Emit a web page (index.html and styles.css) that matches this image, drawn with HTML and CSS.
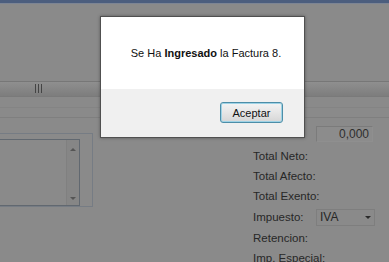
FILE: index.html
```html
<!DOCTYPE html>
<html lang="es">
<head>
    <meta charset="UTF-8">
    <title>Factura</title>
    <link rel="stylesheet" href="styles.css">
</head>
<body>
    <div class="topbar"></div>
    <div class="toolbar"><span class="grip"></span></div>
    <div class="rule rule-a"></div>
    <div class="rule rule-b"></div>

    <div class="content">
        <div class="memo">
            <div class="memo-inner">
                <div class="scroll">
                    <span class="arrow-up"></span>
                    <span class="arrow-down"></span>
                </div>
            </div>
        </div>

        <div class="totals">
            <div class="row-input"><span class="field">0,000</span></div>
            <div class="row">Total Neto:</div>
            <div class="row">Total Afecto:</div>
            <div class="row">Total Exento:</div>
            <div class="row row-select">
                <span class="label">Impuesto:</span>
                <span class="select">IVA<span class="caret"></span></span>
            </div>
            <div class="row">Retencion:</div>
            <div class="row">Imp. Especial:</div>
        </div>
    </div>

    <div class="dialog">
        <div class="dialog-body">
            <p>Se Ha <b>Ingresado</b> la Factura 8.</p>
        </div>
        <div class="dialog-footer">
            <button class="btn">Aceptar</button>
        </div>
    </div>
</body>
</html>
```

FILE: styles.css
```css
body {
    margin: 0;
    width: 389px;
    height: 262px;
    overflow: hidden;
    background: #8a8a8a;
    font-family: 'Liberation Sans', Arial, sans-serif;
    font-size: 11px;
    color: #272727;
    position: relative;
}
.topbar {
    height: 3px;
    background: #4c5e7e;
    border-bottom: 1px solid #7d8594;
}
.toolbar {
    margin-top: 77px;
    height: 14px;
    border-top: 1px solid #777;
    border-bottom: 1px solid #7a7a7a;
    background: linear-gradient(#8f8f8f, #7d7d7d);
    position: relative;
}
.grip {
    display: block;
    margin: 2px 0 0 35px;
    width: 8px;
    height: 9px;
    background: repeating-linear-gradient(90deg, #444 0 1px, transparent 1px 3px);
}
.rule {
    height: 1px;
    background: #7f7f7f;
}
.rule-a {
    margin-top: 10px;
    background: #848484;
}
.rule-b {
    margin-top: 9px;
}
.content {
    display: flex;
}
.memo {
    margin: 15px 0 0 -2px;
    width: 95px;
    height: 74px;
    border: 1px solid #767c84;
    border-left: none;
    box-sizing: border-box;
    padding: 5px 12px 0 0;
}
.memo-inner {
    height: 100%;
    border: 1px solid #616870;
    border-left: none;
    box-sizing: border-box;
    display: flex;
    justify-content: flex-end;
}
.scroll {
    width: 12px;
    border-left: 1px solid #808080;
    background: #868686;
    display: flex;
    flex-direction: column;
    justify-content: space-between;
    align-items: center;
    padding: 8px 0 5px;
}
.arrow-up, .arrow-down {
    width: 0;
    height: 0;
    border-left: 3px solid transparent;
    border-right: 3px solid transparent;
}
.arrow-up {
    border-bottom: 3px solid #555;
}
.arrow-down {
    border-top: 3px solid #555;
}
.totals {
    margin-left: 160px;
    padding-top: 8px;
    width: 130px;
}
.row-input {
    height: 16px;
    margin-bottom: 4px;
}
.field {
    display: block;
    margin-left: 63px;
    width: 57px;
    height: 16px;
    box-sizing: border-box;
    border: 1px solid #7b7b7b;
    border-right-color: #8f8f8f;
    border-bottom-color: #8f8f8f;
    background: #8c8c8c;
    text-align: right;
    padding-right: 3px;
    line-height: 15px;
    font-size: 12px;
    color: #2e2e2e;
}
.row {
    height: 20px;
    line-height: 20px;
    font-size: 11.5px;
}
.row-select {
    height: 22px;
    line-height: 22px;
    display: flex;
    align-items: center;
}
.label {
    width: 63px;
}
.select {
    width: 59px;
    height: 17px;
    box-sizing: border-box;
    border: 1px solid #7e7e7e;
    line-height: 15px;
    padding-left: 3px;
    font-size: 12px;
    position: relative;
}
.caret {
    position: absolute;
    right: 3px;
    top: 6px;
    border-left: 3px solid transparent;
    border-right: 3px solid transparent;
    border-top: 3px solid #2a2a2a;
}
.dialog {
    position: absolute;
    left: 100px;
    top: 16px;
    width: 205px;
    height: 122px;
    box-sizing: border-box;
    border: 1px solid #505050;
    background: #fff;
    box-shadow: 0 0 3px rgba(0, 0, 0, 0.35);
    display: flex;
    flex-direction: column;
}
.dialog-body {
    height: 72px;
    display: flex;
    align-items: center;
    justify-content: center;
    padding-left: 7px;
}
.dialog-body p {
    margin: 0;
    color: #111;
}
.dialog-footer {
    flex: 1;
    background: #f0f0f0;
    display: flex;
    justify-content: flex-end;
    align-items: flex-start;
    padding: 13px 21px 0 0;
}
.btn {
    width: 63px;
    height: 21px;
    border: 1px solid #4d8ea8;
    border-radius: 3px;
    box-shadow: inset 0 0 0 1px #9fd3e6;
    background: linear-gradient(#f4f4f4, #e6e6e6 50%, #d6d6d6);
    font-family: 'Liberation Sans', Arial, sans-serif;
    font-size: 11px;
    color: #111;
    padding: 0;
}
```
